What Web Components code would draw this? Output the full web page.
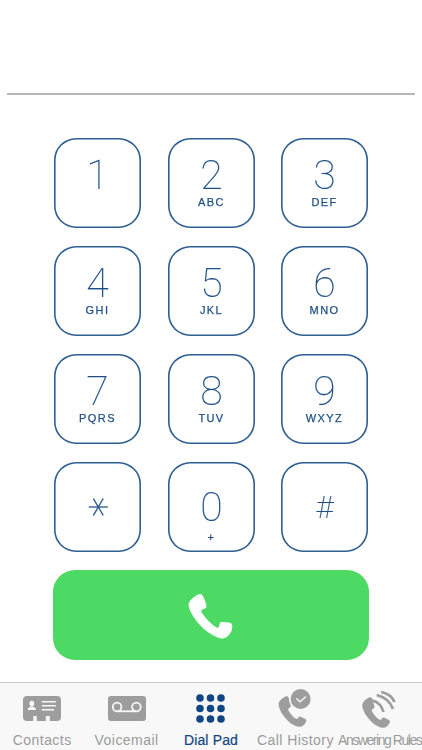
<!DOCTYPE html>
<html>
<head>
<meta charset="utf-8">
<title>Dial Pad</title>
<style>
    html, body { margin: 0; padding: 0; background: #fff; }
    body { width: 422px; height: 750px; overflow: hidden; font-family: "Liberation Sans", Arial, sans-serif; }
</style>
</head>
<body>
<dial-app></dial-app>
<script>
class DialKey extends HTMLElement {
    constructor () {
        super();
        this.attachShadow({mode: 'open'});
        const digit = this.getAttribute("digit") || "";
        const letters = this.getAttribute("letters") || "";
        this.shadowRoot.innerHTML = `
<style>
    :host {
        display: block;
        box-sizing: border-box;
        width: 87px;
        height: 90px;
        box-shadow: inset 0 0 0 1.6px #2f5e90;
        border-radius: 22px;
        color: #1f4f85;
        text-align: center;
        padding-top: 19px;
        will-change: transform;
    }
    .digit {
        font-family: Roboto, "Liberation Sans", sans-serif;
        font-weight: 100;
        font-size: 41px;
        line-height: 36px;
        height: 36px;
        -webkit-text-stroke: 0.15px #1f4f85;
    }
    .letters {
        font-family: "Liberation Sans", Arial, sans-serif;
        font-size: 11px;
        letter-spacing: 1.4px;
        line-height: 13px;
        margin-top: 3px;
        -webkit-text-stroke: 0.25px #1f4f85;
    }
    :host([low]) { padding-top: 27px; }
    :host([low]) .letters { margin-top: 6px; }
    :host([symbol]) .digit { font-size: 32px; }
    /* the dial pad star has a flat arm, so lay the six armed glyph on its side */
    .star {
        display: inline-block;
        font-family: "DejaVu Sans", sans-serif;
        font-weight: 200;
        font-size: 40px;
        transform: translate(-7px, 0) rotate(90deg);
        -webkit-text-stroke: 0.3px #1f4f85;
    }
</style>
<div class="digit">${digit === "*" ? `<span class="star">*</span>` : digit}</div>
<div class="letters">${letters}</div>`;
    }
}
customElements.define('dial-key', DialKey);

class CallButton extends HTMLElement {
    constructor () {
        super();
        this.attachShadow({mode: 'open'});
        this.shadowRoot.innerHTML = `
<style>
    :host {
        display: flex;
        align-items: center;
        justify-content: center;
        width: 316px;
        height: 90px;
        background: #4cd964;
        border-radius: 22px;
    }
    svg { width: 46px; height: 46px; margin-left: -3px; margin-top: 1px; }
</style>
<svg viewBox="0 0 46 46"><path fill="#fff" d="M11 1.500 C6.500 4 1.500 8 1.500 12 C2 17 6 24 12 31 C18 38 27 44 34 45.500 C38 46 42 43 44.500 38 C45.500 35.500 45.500 32 44.500 30.500 C43.500 29.500 38 29 34.500 29 C33 29 32.500 31 32 33.500 C31.800 34.800 30.500 35 29.500 34.500 C25 32 18 25 14.500 19 C14 18 14.500 17 15.500 16.500 C18 15.500 19.500 15 19.500 13 C19 9.500 16.500 3.500 15 1.800 C14 .8 12.500 .8 11 1.500 Z"/></svg>`;
    }
}
customElements.define('call-button', CallButton);

class TabItem extends HTMLElement {
    constructor () {
        super();
        this.attachShadow({mode: 'open'});
        const squeeze = this.getAttribute("squeeze");
        this.shadowRoot.innerHTML = `
<style>
    :host {
        display: flex;
        flex-direction: column;
        align-items: center;
        width: 84.4px;
        color: #9b9b9b;
        font-size: 14px;
        letter-spacing: 0.45px;
    }
    :host([active]) { color: #12457f; letter-spacing: 0.15px; -webkit-text-stroke: 0.2px #12457f; }
    .icon { height: 38px; display: flex; align-items: flex-start; justify-content: center; }
    .label { margin-top: 11px; line-height: 16px; white-space: nowrap; ${squeeze ? `letter-spacing: ${squeeze}px;` : ""} }
</style>
<div class="icon"><slot></slot></div>
<div class="label">${this.getAttribute("label")}</div>`;
    }
}
customElements.define('tab-item', TabItem);

class TabBar extends HTMLElement {
    constructor () {
        super();
        this.attachShadow({mode: 'open'});
        this.shadowRoot.innerHTML = `
<style>
    :host {
        display: flex;
        box-sizing: border-box;
        height: 68px;
        background: #f8f8f8;
        border-top: 1px solid #c9c9c9;
    }
</style>
<slot></slot>`;
    }
}
customElements.define('tab-bar', TabBar);

const handset = `M11 1 C6 3.500 2.500 7 2.500 11 C3 17 7 24 13 30 C18 35.500 25 38.500 29.500 38.500 C32 38.500 35 35.500 36.500 32 C37 30.500 36.500 29 35 28.500 L30 26 C28.500 25.500 27.500 26 26.500 27.500 C25.500 29 24.500 29 23 28 C20 26 16 21 14.500 18 C14 16.500 14.500 16 16 15 C17.500 14 18 13 17.500 11.500 L15 3 C14.500 1 12.500 .5 11 1 Z`;

class DialApp extends HTMLElement {
    constructor () {
        super();
        this.attachShadow({mode: 'open'});
        this.shadowRoot.innerHTML = `
<style>
    :host {
        display: flex;
        flex-direction: column;
        width: 422px;
        height: 750px;
        background: #fff;
    }
    .display {
        height: 93px;
        margin: 0 7px;
        border-bottom: 2px solid #b6b6b6;
        flex: none;
    }
    .pad {
        display: grid;
        grid-template-columns: repeat(3, 87px);
        grid-auto-rows: 90px;
        column-gap: 26.500px;
        row-gap: 18px;
        justify-content: center;
        margin-top: 43px;
    }
    call-button { margin: 18px 0 0 53px; }
    tab-bar { margin-top: auto; }
</style>
<div class="display"></div>
<div class="pad">
    <dial-key digit="1"></dial-key>
    <dial-key digit="2" letters="ABC"></dial-key>
    <dial-key digit="3" letters="DEF"></dial-key>
    <dial-key digit="4" letters="GHI"></dial-key>
    <dial-key digit="5" letters="JKL"></dial-key>
    <dial-key digit="6" letters="MNO"></dial-key>
    <dial-key digit="7" letters="PQRS"></dial-key>
    <dial-key digit="8" letters="TUV"></dial-key>
    <dial-key digit="9" letters="WXYZ"></dial-key>
    <dial-key digit="*" symbol low></dial-key>
    <dial-key digit="0" letters="+" low></dial-key>
    <dial-key digit="#" symbol low></dial-key>
</div>
<call-button></call-button>
<tab-bar>
    <tab-item label="Contacts">
        <svg style="margin-top:13px" width="38" height="25" viewBox="0 0 38 25"><path fill="#9d9d9d" fill-rule="evenodd" d="M4 0 H34 A4 4 0 0 1 38 4 V21 A4 4 0 0 1 34 25 H26.800 V20 H22.800 V25 H13.800 V20 H10.300 V25 H4 A4 4 0 0 1 0 21 V4 A4 4 0 0 1 4 0 Z M8.800 4.800 A2.400 2.800 0 0 0 8.800 10.400 A2.400 2.800 0 0 0 8.800 4.800 Z M4.800 14 H12.800 V12.500 L10.500 10.800 H7.100 L4.800 12.500 Z M18.800 5 V6.500 H32.800 V5 Z M18.800 9 V10.500 H32.800 V9 Z M18.800 13 V14.500 H31 V13 Z"/></svg>
    </tab-item>
    <tab-item label="Voicemail">
        <svg style="margin-top:13px" width="38" height="25" viewBox="0 0 38 25"><rect width="38" height="25" rx="3" fill="#9d9d9d"/><g fill="none" stroke="#f8f8f8" stroke-width="1.800"><circle cx="9.100" cy="11" r="4.300"/><circle cx="28.400" cy="11" r="4.300"/><path d="M9.100 15.300 H28.400"/></g></svg>
    </tab-item>
    <tab-item label="Dial Pad" active>
        <svg style="margin-top:10px" width="29" height="30" viewBox="0 0 29 30" fill="#0f4683"><circle cx="4" cy="5" r="3.800"/><circle cx="14.500" cy="5" r="3.800"/><circle cx="25" cy="5" r="3.800"/><circle cx="4" cy="15.500" r="3.800"/><circle cx="14.500" cy="15.500" r="3.800"/><circle cx="25" cy="15.500" r="3.800"/><circle cx="4" cy="26" r="3.800"/><circle cx="14.500" cy="26" r="3.800"/><circle cx="25" cy="26" r="3.800"/></svg>
    </tab-item>
    <tab-item label="Call History">
        <svg style="margin-top:6px" width="34" height="39" viewBox="0 0 34 39"><path fill="#9d9d9d" d="${handset}" transform="translate(-1.400 6.600) scale(.81)"/><circle cx="22.600" cy="10" r="11.500" fill="#f8f8f8"/><circle cx="22.600" cy="10" r="10" fill="#9d9d9d"/><path d="M18.500 9.500 L22 12.800 L28 7.500" fill="none" stroke="#f8f8f8" stroke-width="1.500"/></svg>
    </tab-item>
    <tab-item label="Answering Rules" squeeze="-1.45">
        <svg style="margin-top:6px" width="38" height="39" viewBox="0 0 38 39"><path fill="#9d9d9d" d="${handset}" transform="translate(-.8 7.600) scale(.81)"/><g fill="none" stroke="#9d9d9d" stroke-width="2.800"><path d="M20.200 3 Q30 5 33.500 13"/><path d="M15.700 6 Q28 9 32 20"/><path d="M11.700 11.500 Q20 14 22.500 23"/></g></svg>
    </tab-item>
</tab-bar>`;
    }
}
customElements.define('dial-app', DialApp);
</script>
</body>
</html>
